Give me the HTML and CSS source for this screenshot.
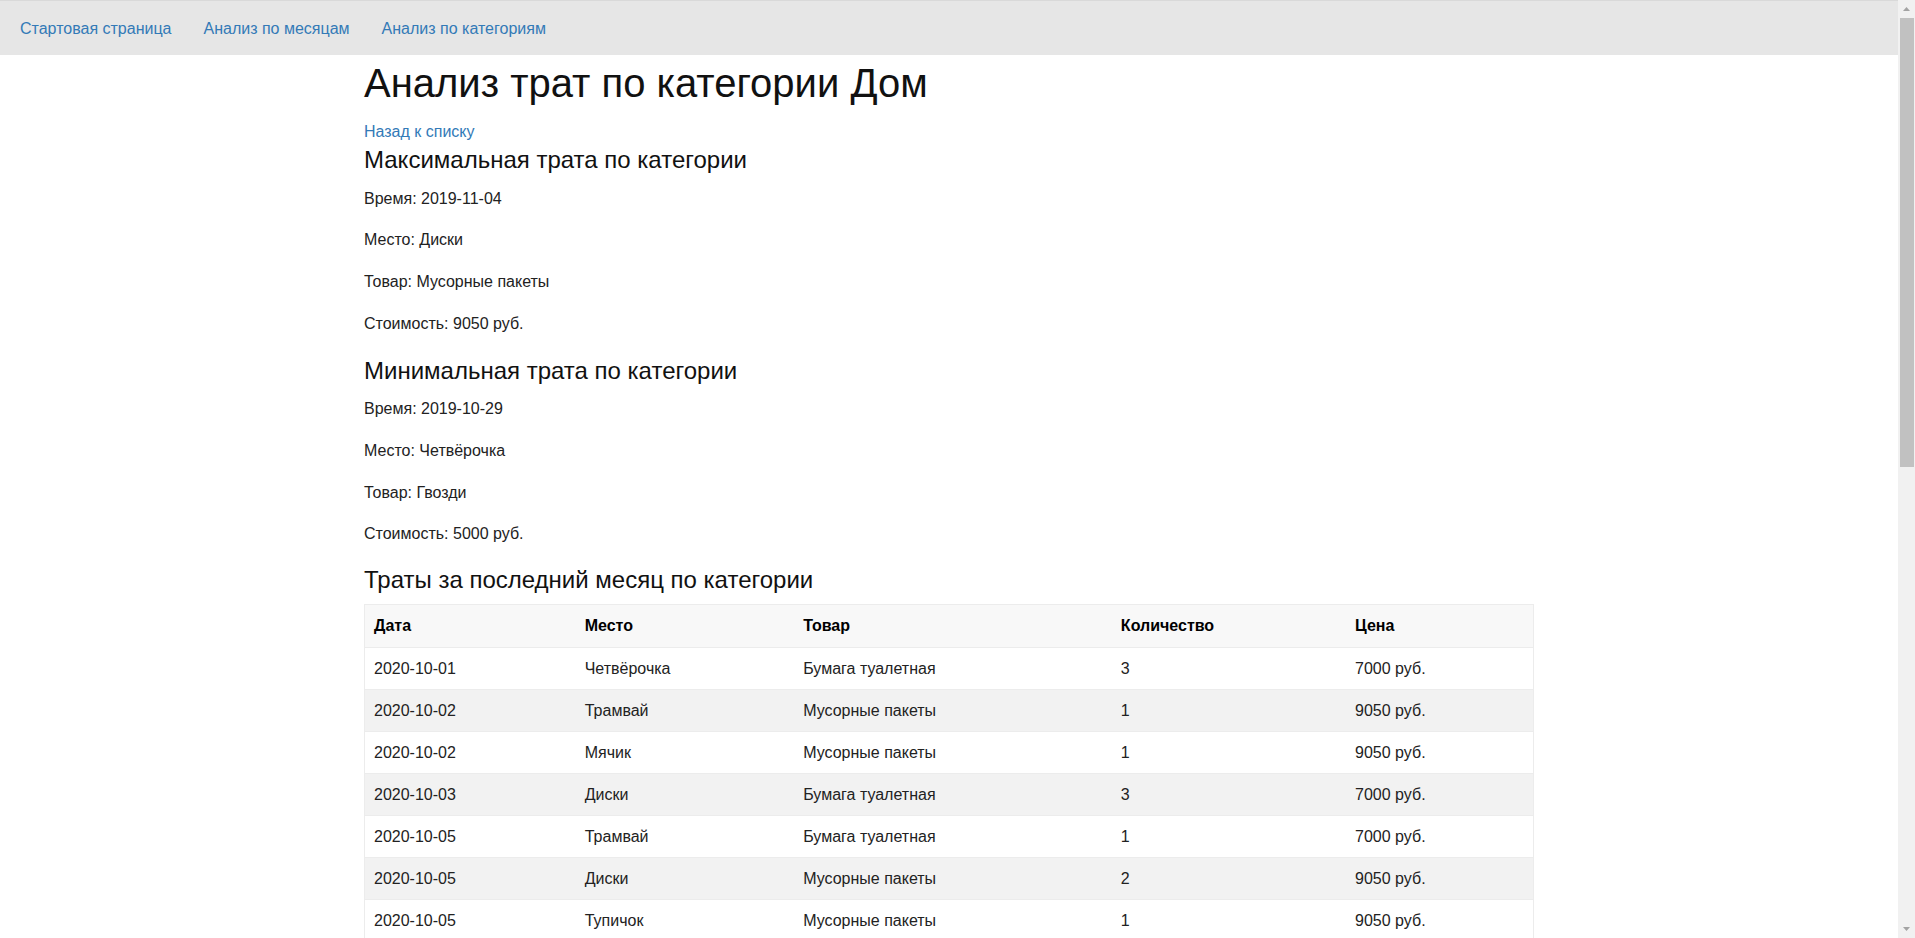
FILE: index.html
```html
<!DOCTYPE html>
<html lang="ru">
<head>
<meta charset="utf-8">
<title>Анализ трат по категории Дом</title>
<link rel="stylesheet" href="styles.css">
</head>
<body>
<nav class="navbar">
  <ul class="nav-list">
    <li><a class="nav-link" href="#">Стартовая страница</a></li>
    <li><a class="nav-link" href="#">Анализ по месяцам</a></li>
    <li><a class="nav-link" href="#">Анализ по категориям</a></li>
  </ul>
</nav>
<main class="container">
  <h1 class="title">Анализ трат по категории Дом</h1>
  <div class="back-row"><a class="back-link" href="#">Назад к списку</a></div>

  <section class="block">
    <h2 class="heading heading-first">Максимальная трата по категории</h2>
    <p class="line">Время: 2019-11-04</p>
    <p class="line">Место: Диски</p>
    <p class="line">Товар: Мусорные пакеты</p>
    <p class="line">Стоимость: 9050 руб.</p>
  </section>

  <section class="block">
    <h2 class="heading">Минимальная трата по категории</h2>
    <p class="line">Время: 2019-10-29</p>
    <p class="line">Место: Четвёрочка</p>
    <p class="line">Товар: Гвозди</p>
    <p class="line">Стоимость: 5000 руб.</p>
  </section>

  <section class="block">
    <h2 class="heading heading-table">Траты за последний месяц по категории</h2>
    <table class="data-table">
      <thead>
        <tr><th>Дата</th><th>Место</th><th>Товар</th><th>Количество</th><th>Цена</th></tr>
      </thead>
      <tbody>
        <tr><td>2020-10-01</td><td>Четвёрочка</td><td>Бумага туалетная</td><td>3</td><td>7000 руб.</td></tr>
        <tr><td>2020-10-02</td><td>Трамвай</td><td>Мусорные пакеты</td><td>1</td><td>9050 руб.</td></tr>
        <tr><td>2020-10-02</td><td>Мячик</td><td>Мусорные пакеты</td><td>1</td><td>9050 руб.</td></tr>
        <tr><td>2020-10-03</td><td>Диски</td><td>Бумага туалетная</td><td>3</td><td>7000 руб.</td></tr>
        <tr><td>2020-10-05</td><td>Трамвай</td><td>Бумага туалетная</td><td>1</td><td>7000 руб.</td></tr>
        <tr><td>2020-10-05</td><td>Диски</td><td>Мусорные пакеты</td><td>2</td><td>9050 руб.</td></tr>
        <tr><td>2020-10-05</td><td>Тупичок</td><td>Мусорные пакеты</td><td>1</td><td>9050 руб.</td></tr>
        <tr><td>2020-10-07</td><td>Четвёрочка</td><td>Гвозди</td><td>2</td><td>5000 руб.</td></tr>
        <tr><td>2020-10-08</td><td>Мячик</td><td>Бумага туалетная</td><td>1</td><td>7000 руб.</td></tr>
        <tr><td>2020-10-09</td><td>Диски</td><td>Мусорные пакеты</td><td>3</td><td>9050 руб.</td></tr>
        <tr><td>2020-10-10</td><td>Трамвай</td><td>Гвозди</td><td>1</td><td>5000 руб.</td></tr>
        <tr><td>2020-10-11</td><td>Тупичок</td><td>Бумага туалетная</td><td>2</td><td>7000 руб.</td></tr>
        <tr><td>2020-10-12</td><td>Четвёрочка</td><td>Мусорные пакеты</td><td>1</td><td>9050 руб.</td></tr>
        <tr><td>2020-10-13</td><td>Диски</td><td>Гвозди</td><td>4</td><td>5000 руб.</td></tr>
        <tr><td>2020-10-14</td><td>Мячик</td><td>Мусорные пакеты</td><td>2</td><td>9050 руб.</td></tr>
        <tr><td>2020-10-15</td><td>Трамвай</td><td>Бумага туалетная</td><td>1</td><td>7000 руб.</td></tr>
        <tr><td>2020-10-16</td><td>Тупичок</td><td>Гвозди</td><td>3</td><td>5000 руб.</td></tr>
        <tr><td>2020-10-17</td><td>Четвёрочка</td><td>Бумага туалетная</td><td>2</td><td>7000 руб.</td></tr>
        <tr><td>2020-10-18</td><td>Диски</td><td>Мусорные пакеты</td><td>1</td><td>9050 руб.</td></tr>
        <tr><td>2020-10-19</td><td>Мячик</td><td>Гвозди</td><td>1</td><td>5000 руб.</td></tr>
        <tr><td>2020-10-20</td><td>Трамвай</td><td>Мусорные пакеты</td><td>2</td><td>9050 руб.</td></tr>
        <tr><td>2020-10-21</td><td>Тупичок</td><td>Бумага туалетная</td><td>3</td><td>7000 руб.</td></tr>
        <tr><td>2020-10-22</td><td>Четвёрочка</td><td>Гвозди</td><td>1</td><td>5000 руб.</td></tr>
        <tr><td>2020-10-23</td><td>Диски</td><td>Бумага туалетная</td><td>2</td><td>7000 руб.</td></tr>
        <tr><td>2020-10-24</td><td>Мячик</td><td>Мусорные пакеты</td><td>1</td><td>9050 руб.</td></tr>
        <tr><td>2020-10-26</td><td>Трамвай</td><td>Гвозди</td><td>2</td><td>5000 руб.</td></tr>
        <tr><td>2020-10-27</td><td>Тупичок</td><td>Мусорные пакеты</td><td>1</td><td>9050 руб.</td></tr>
        <tr><td>2020-10-29</td><td>Четвёрочка</td><td>Бумага туалетная</td><td>1</td><td>7000 руб.</td></tr>
        <tr><td>2020-10-30</td><td>Диски</td><td>Мусорные пакеты</td><td>2</td><td>9050 руб.</td></tr>
      </tbody>
    </table>
  </section>
</main>

<div class="scrollbar" aria-hidden="true">
  <div class="scroll-btn">
    <svg width="17" height="17" viewBox="0 0 17 17"><polygon points="5,11 12,11 8.5,7" fill="#a3a3a3"/></svg>
  </div>
  <div class="scroll-track">
    <div class="scroll-thumb"></div>
  </div>
  <div class="scroll-btn">
    <svg width="17" height="17" viewBox="0 0 17 17"><polygon points="5,6 12,6 8.5,10" fill="#a3a3a3"/></svg>
  </div>
</div>
</body>
</html>
```
FILE: styles.css
```css
html {
  background: #fff;
}

body {
  margin: 0;
  padding-right: 17px;
  font-family: "Liberation Sans", Arial, sans-serif;
  font-size: 16px;
  line-height: 25px;
  color: #222;
  background: #fff;
}

a {
  color: #337ab7;
  text-decoration: none;
}

.navbar {
  background: #e6e6e6;
  border-top: 1px solid #d9d9d9;
  height: 54px;
}

.nav-list {
  list-style: none;
  margin: 0;
  padding: 0 0 0 4px;
  display: flex;
}

.nav-link {
  display: block;
  padding: 15px 16px 14px;
  line-height: 25px;
  font-size: 16px;
}

.container {
  width: 1170px;
  margin: 0 auto;
  padding: 0 15px 20px;
}

.title {
  font-size: 40px;
  font-weight: 400;
  line-height: 48px;
  margin: 4px 0 12px;
  color: #111;
}

.back-row {
  line-height: 25px;
}

.heading {
  font-size: 24px;
  font-weight: 400;
  line-height: 28.8px;
  margin: 21px 0 11px;
  color: #111;
}

.heading-first {
  margin-top: 2px;
}

.heading-table {
  margin-top: 20px;
  margin-bottom: 9px;
}

.line {
  margin: 0 0 16.6px;
}

.data-table {
  width: 100%;
  border-collapse: collapse;
  border: 1px solid #ececec;
  margin-bottom: 16px;
}

.data-table th,
.data-table td {
  text-align: left;
  padding: 8px 9px;
  line-height: 25px;
  border-top: 1px solid #ececec;
  vertical-align: top;
}

.data-table th {
  padding-bottom: 9px;
  font-weight: 700;
  color: #000;
  background: #f8f8f8;
}

.data-table tbody tr:nth-child(even) {
  background: #f2f2f2;
}

/* window scrollbar, drawn over the right edge */
.scrollbar {
  position: fixed;
  top: 0;
  right: 0;
  width: 17px;
  height: 100vh;
  background: #f1f1f1;
  display: flex;
  flex-direction: column;
}

.scroll-btn {
  height: 17px;
  flex: none;
}

.scroll-btn svg {
  display: block;
}

.scroll-track {
  flex: 1;
}

.scroll-thumb {
  height: 449px;
  margin: 1px 1px 0 2px;
  background: #c1c1c1;
}
```
